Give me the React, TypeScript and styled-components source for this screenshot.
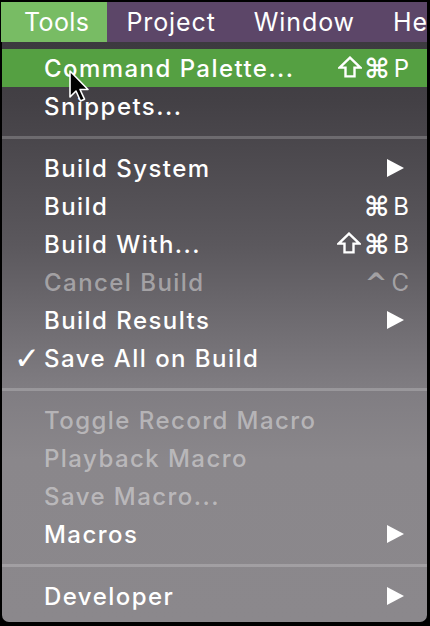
import React from 'react'
import styled, { createGlobalStyle } from 'styled-components'

type Item =
  | { kind: 'sep' }
  | { kind: 'item'; label: string; shift?: boolean; mods?: string; key?: string; submenu?: boolean; disabled?: boolean; checked?: boolean; active?: boolean }

const items: Item[] = [
  { kind: 'item', label: 'Command Palette...', shift: true, mods: '⌘', key: 'P', active: true },
  { kind: 'item', label: 'Snippets...' },
  { kind: 'sep' },
  { kind: 'item', label: 'Build System', submenu: true },
  { kind: 'item', label: 'Build', mods: '⌘', key: 'B' },
  { kind: 'item', label: 'Build With...', shift: true, mods: '⌘', key: 'B' },
  { kind: 'item', label: 'Cancel Build', mods: '^', key: 'C', disabled: true },
  { kind: 'item', label: 'Build Results', submenu: true },
  { kind: 'item', label: 'Save All on Build', checked: true },
  { kind: 'sep' },
  { kind: 'item', label: 'Toggle Record Macro', disabled: true },
  { kind: 'item', label: 'Playback Macro', disabled: true },
  { kind: 'item', label: 'Save Macro...', disabled: true },
  { kind: 'item', label: 'Macros', submenu: true },
  { kind: 'sep' },
  { kind: 'item', label: 'Developer', submenu: true },
]

const barItems = ['Tools', 'Project', 'Window', 'Help']

function Arrow() {
  return (
    <svg width="19" height="18" viewBox="0 0 19 18">
      <path d="M1 0 L18 9 L1 18 Z" fill="#fff" />
    </svg>
  )
}

// shift key symbol
function Shift() {
  return (
    <S.ShiftIcon width="24" height="22" viewBox="0 0 24 22">
      <path
        d="M12 1.6 L22.4 11.6 L16.5 11.6 L16.5 20.4 L7.5 20.4 L7.5 11.6 L1.6 11.6 Z"
        fill="none"
        stroke="currentColor"
        strokeWidth="2.4"
        strokeLinejoin="miter"
      />
    </S.ShiftIcon>
  )
}

function Cursor() {
  return (
    <S.Cursor width="24" height="36" viewBox="0 0 24 36">
      <path
        d="M2 2 L2 28 L8 22 L12.5 32 L16.5 30.2 L12 20.5 L20 20.5 Z"
        fill="#000"
        stroke="#fff"
        strokeWidth="1.6"
        strokeLinejoin="round"
      />
    </S.Cursor>
  )
}

export default function App() {
  return (
    <>
      <Global />
      <S.Frame>
        <S.Bar>
          {barItems.map((t, i) => (
            <S.BarItem key={t} active={i === 0}>{t}</S.BarItem>
          ))}
        </S.Bar>

        <S.Menu>
          {items.map((it, i) => {
            if (it.kind === 'sep') return <S.Sep key={i} />
            return (
              <S.Row key={i} active={it.active} disabled={it.disabled}>
                <S.Check>{it.checked ? '✓' : ''}</S.Check>
                <S.Label>{it.label}</S.Label>
                {it.key && (
                  <S.Shortcut>
                    {it.shift && <Shift />}
                    <S.Mods>{it.mods}</S.Mods>
                    {it.key}
                  </S.Shortcut>
                )}
                {it.submenu && <S.Sub><Arrow /></S.Sub>}
              </S.Row>
            )
          })}
          <Cursor />
        </S.Menu>
      </S.Frame>
    </>
  )
}

const Global = createGlobalStyle`
  html, body {
    margin: 0;
    padding: 0;
    background: #000;
  }
  body {
    font-family: Inter, 'Noto Sans', 'DejaVu Sans', sans-serif;
    -webkit-font-smoothing: antialiased;
  }
`

const S = {
  Frame: styled.div`
    width: 430px;
    height: 626px;
    box-sizing: border-box;
    padding: 2px 3px 4px 1px;
    background: #000;
    display: flex;
    flex-direction: column;
    overflow: hidden;
  `,

  Bar: styled.div`
    height: 40px;
    flex-shrink: 0;
    background: #5c4668;
    display: flex;
    align-items: stretch;
    overflow: hidden;
    white-space: nowrap;
  `,

  BarItem: styled.div<{ active?: boolean }>`
    display: flex;
    align-items: center;
    flex-shrink: 0;
    padding: 0 19px;
    background: ${({ active }) => active ? '#78bc64' : 'transparent'};
    color: #fff;
    font-size: 25px;
    font-weight: 400;
    letter-spacing: 0.9px;

    &:first-child {
      padding: 0 18px 0 23px;
      letter-spacing: 0.4px;
    }
  `,

  Menu: styled.div`
    position: relative;
    flex: 1;
    margin-left: 1px;
    padding: 7px 0 0;
    border-radius: 0 0 7px 7px;
    background: linear-gradient(180deg, #3c3a3f 0%, #434045 10%, #5b585d 35%, #807d82 60%, #8a878b 72%, #8b888c 100%);
  `,

  Row: styled.div<{ active?: boolean; disabled?: boolean }>`
    height: 38px;
    display: flex;
    align-items: center;
    padding: 0 18px 0 0;
    background: ${({ active }) => active ? '#55a042' : 'transparent'};
    color: ${({ disabled }) => disabled ? 'rgba(255,255,255,0.42)' : '#fff'};
    font-size: 24px;
    font-weight: 500;
    letter-spacing: 1.45px;
  `,

  Check: styled.span`
    width: 42px;
    flex-shrink: 0;
    text-align: right;
    padding-right: 4px;
    box-sizing: border-box;
    font-family: 'DejaVu Sans', sans-serif;
    font-size: 31px;
    font-weight: 700;
    letter-spacing: 0;
  `,

  Label: styled.span`
    flex: 1;
    white-space: nowrap;
  `,

  Shortcut: styled.span`
    display: flex;
    align-items: center;
    font-size: 24px;
    font-weight: 400;
    letter-spacing: 0;
  `,

  ShiftIcon: styled.svg`
    display: block;
    margin-right: 3px;
    margin-top: -3px;
  `,

  Mods: styled.span`
    font-family: 'DejaVu Sans', sans-serif;
    font-size: 27px;
    font-weight: 700;
    margin-right: 4px;
  `,

  Sub: styled.span`
    display: flex;
    padding-right: 4px;
  `,

  Sep: styled.div`
    height: 3px;
    margin: 11px 0 10px;
    background: rgba(255,255,255,0.2);
  `,

  Cursor: styled.svg`
    position: absolute;
    left: 66px;
    top: 27px;
  `,
}
